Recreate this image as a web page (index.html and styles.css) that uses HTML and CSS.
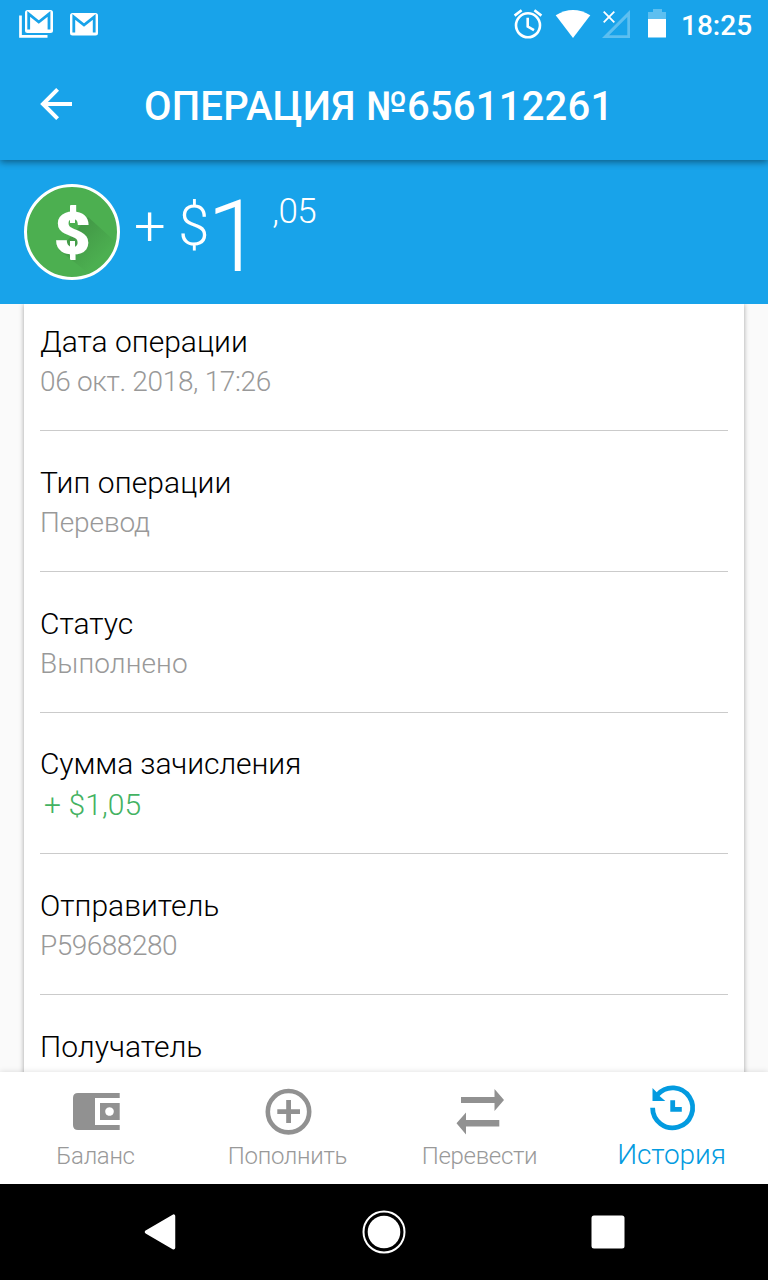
FILE: index.html
```html
<!DOCTYPE html>
<html lang="ru">
<head>
<meta charset="utf-8">
<title>Операция №656112261</title>
<link rel="stylesheet" href="styles.css">
</head>
<body>
<div class="screen">
  <header class="header">
    <div class="status">
      <svg class="status-left" width="120" height="48" viewBox="0 0 120 48">
        <path d="M20.500 15.500V36.300H47.500" fill="none" stroke="#fff" stroke-width="2.700"/>
        <rect x="25" y="10" width="28" height="23" rx="2.500" fill="#fff"/>
        <path d="M28.700 29.500V14L38.800 22L49 14V29.500" fill="none" stroke="#18a3ea" stroke-width="2.800"/>
        <rect x="70" y="13" width="28" height="22.500" rx="2.500" fill="#fff"/>
        <path d="M73.800 32.500V17L84 25L94.200 17V32.500" fill="none" stroke="#18a3ea" stroke-width="2.800"/>
      </svg>
      <svg class="status-right" width="168" height="48" viewBox="506 0 168 48">
        <g fill="none" stroke="#fff" stroke-width="2.600">
          <circle cx="528" cy="25.300" r="12"/>
          <path d="M527.700 17.800V26.500L534 30.200M514.600 15.600L521.600 10.200M541.400 15.600L534.400 10.200"/>
        </g>
        <path d="M555.700 15.300Q573 4.500 590.300 15.300L573 38Z" fill="#fff"/>
        <path fill-rule="evenodd" d="M602 38L630 10V38ZM609 35.300H627.300V17Z" fill="#5dbff0"/>
        <path d="M603.700 11.700L614.300 22.300M614.300 11.700L603.700 22.300" stroke="#fff" stroke-width="1.800"/>
        <path d="M653 9H662V12H666V20H648V12H653Z" fill="#5dbff0"/>
        <path d="M648 19H666V37.500H648Z" fill="#fff"/>
      </svg>
      <span class="clock">18:25</span>
    </div>
    <div class="toolbar">
      <svg class="back" width="32" height="32" viewBox="0 0 32 32"><path d="M32 16H3M17.600 1.400L3 16L17.600 30.600" fill="none" stroke="#fff" stroke-width="4"/></svg>
      <h1 class="title">ОПЕРАЦИЯ №656112261</h1>
    </div>
  </header>

  <section class="summary">
    <div class="coin">
      <svg width="96" height="96" viewBox="0 0 96 96">
        <defs><linearGradient id="shade" x1="50" y1="45" x2="78" y2="73" gradientUnits="userSpaceOnUse"><stop offset="0" stop-color="#429746"/><stop offset="1" stop-color="#4caf50"/></linearGradient></defs>
        <circle cx="48" cy="48" r="46.500" fill="#4caf50"/>
        <path d="M64 33L94 60L68 92L35 66Z" fill="url(#shade)"/>
        <circle cx="48" cy="48" r="46.500" fill="none" stroke="#fff" stroke-width="3"/>
        <text class="coin-sign" transform="translate(48.400 69.500) scale(1.100 1)">$</text>
        <path d="M46 21.300h5V39h-5ZM46 57h5V75.300h-5Z" fill="#fff"/>
      </svg>
    </div>
    <span class="sign">+ $</span><span class="whole">1</span><span class="cents">,05</span>
  </section>

  <main class="content">
    <div class="card">
      <div class="row"><div class="label">Дата операции</div><div class="value numeric">06 окт. 2018, 17:26</div></div>
      <div class="row"><div class="label loose">Тип операции</div><div class="value">Перевод</div></div>
      <div class="row"><div class="label">Статус</div><div class="value loose">Выполнено</div></div>
      <div class="row row-amount"><div class="label tight">Сумма зачисления</div><div class="value income">+ $1,05</div></div>
      <div class="row"><div class="label">Отправитель</div><div class="value account">P59688280</div></div>
      <div class="row"><div class="label">Получатель</div></div>
    </div>
  </main>

  <nav class="tabs">
    <a class="tab">
      <svg width="56" height="56" viewBox="68 1084 56 56" fill="#919191">
        <path d="M78 1093H119.700V1098H95V1125H119.700V1130H78Q73 1130 73 1125V1098Q73 1093 78 1093Z"/>
        <path fill-rule="evenodd" d="M100 1103H119.700V1120H100ZM109.500 1107.200a4.300 4.300 0 1 0 .01 0Z"/>
      </svg>
      <span>Баланс</span>
    </a>
    <a class="tab">
      <svg width="56" height="56" viewBox="260 1084 56 56" fill="none" stroke="#919191">
        <circle cx="288.500" cy="1111.700" r="20.700" stroke-width="4.600"/>
        <path d="M277.300 1111.700H300M288.600 1100V1123" stroke-width="4.800"/>
      </svg>
      <span>Пополнить</span>
    </a>
    <a class="tab">
      <svg width="56" height="56" viewBox="452 1084 56 56" fill="#919191">
        <path d="M461 1097H494.500V1089L504 1100L494.500 1111V1103H461Z"/>
        <path d="M499.300 1120H466V1112.500L456.500 1123.300L466 1134.500V1126.500H499.300Z"/>
      </svg>
      <span>Перевести</span>
    </a>
    <a class="tab active">
      <svg width="56" height="56" viewBox="644 1084 56 56">
        <path d="M652.600 1107.800A20 20 0 1 0 657.500 1094.700" fill="none" stroke="#039be0" stroke-width="4.800"/>
        <path d="M652.500 1088V1101H665.300L659.800 1096.200L657 1092.500Z" fill="#039be0"/>
        <path d="M672.700 1100.200V1109.300H681.800" fill="none" stroke="#039be0" stroke-width="4.800"/>
      </svg>
      <span>История</span>
    </a>
  </nav>

  <footer class="sysnav">
    <svg width="768" height="96" viewBox="0 1184 768 96" fill="#fff">
      <path d="M146.500 1232L173.500 1216.200V1247.800Z" stroke="#fff" stroke-width="3.500" stroke-linejoin="round"/>
      <circle cx="384" cy="1232" r="16.300"/>
      <circle cx="384" cy="1232" r="20.500" fill="none" stroke="#fff" stroke-width="2"/>
      <rect x="591.500" y="1215.500" width="33" height="33" rx="2.500"/>
    </svg>
  </footer>
</div>
</body>
</html>
```

FILE: styles.css
```css
* { box-sizing: border-box; }
body { margin: 0; font-family: Roboto, "Noto Sans", sans-serif; background: #fafafa; }
svg { display: block; }
.screen { width: 768px; height: 1280px; display: flex; flex-direction: column; overflow: hidden; }

.header {
  height: 160px; flex: none; background: #18a3ea; color: #fff;
  position: relative; z-index: 2; box-shadow: 0 2px 7px rgba(0, 0, 0, .45);
}
.status { height: 48px; display: flex; align-items: center; padding-right: 17px; }
.status-right { margin-left: auto; }
.clock { width: 70px; margin: 4px 0 0 7px; font-size: 28px; font-weight: 500; line-height: 50px; white-space: nowrap; }
.toolbar { height: 112px; display: flex; align-items: center; padding-left: 40px; }
.title { margin: 6px 0 0 72px; font-size: 40px; font-weight: 500; line-height: 48px; letter-spacing: .2px; white-space: nowrap; }

.summary {
  height: 144px; flex: none; display: flex; align-items: flex-start;
  background: #18a3ea; color: #fff; padding-left: 24px; font-weight: 300; white-space: nowrap;
}
.coin { margin-top: 24px; }
.coin-sign { font-size: 59px; font-weight: 900; fill: #fff; text-anchor: middle; }
.sign { margin: 35px 0 0 14px; font-size: 56px; line-height: 62px; letter-spacing: -.5px; }
.whole { margin: 27px 0 0 -2px; font-size: 100px; line-height: 100px; }
.cents { margin: 32px 0 0 10px; font-size: 35px; line-height: 40px; letter-spacing: -.6px; }

.content { height: 768px; flex: none; padding: 0 24px; overflow: hidden; }
.card { height: 800px; background: #fff; padding: 0 16px; box-shadow: 0 0 5px rgba(0, 0, 0, .35); }
.row { height: 141px; padding-top: 32px; border-bottom: 1px solid #cbcbcb; font-weight: 300; white-space: nowrap; }
.row:first-child { height: 127px; padding-top: 18px; }
.label { font-size: 30px; line-height: 40px; color: #000; }
.value { font-size: 28px; line-height: 40px; letter-spacing: -.1px; color: #999; }
.loose { letter-spacing: .1px; }
.tight { letter-spacing: -.12px; }
.numeric { letter-spacing: -.33px; }
.account { letter-spacing: -.5px; }
.row-amount { padding-top: 31px; }
.value.income { font-size: 30px; line-height: 42px; padding-left: 4px; letter-spacing: .1px; color: #43b262; }

.tabs {
  height: 112px; flex: none; display: grid; grid-template-columns: repeat(4, 192px);
  background: #fff; position: relative; z-index: 2; box-shadow: 0 0 6px rgba(0, 0, 0, .14);
}
.tab {
  display: flex; flex-direction: column; align-items: center; padding-top: 12px;
  color: #999; font-size: 24px; font-weight: 300; line-height: 32px; letter-spacing: -.3px; white-space: nowrap;
}
.tab span { padding-right: 1px; }
.tab svg { flex: none; }
.tab.active { font-size: 28px; line-height: 29px; letter-spacing: -.1px; color: #039be0; }
.sysnav { height: 96px; flex: none; background: #000; }
```
